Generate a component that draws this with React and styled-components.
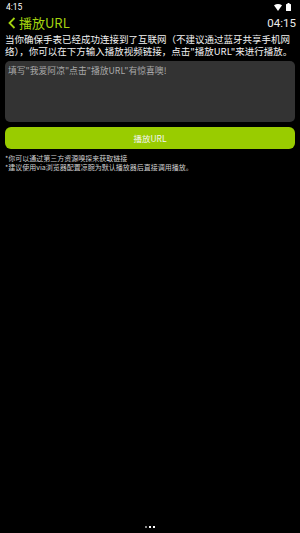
import React from 'react';
import styled, { createGlobalStyle } from 'styled-components';

const GlobalStyle = createGlobalStyle`
  html, body {
    margin: 0;
    padding: 0;
    background: #000;
  }
  body {
    font-family: "Noto Sans CJK SC", "Noto Sans", sans-serif;
  }
`;

const Screen = styled.div`
  width: 300px;
  height: 533px;
  background: #000;
  color: #fff;
  display: flex;
  flex-direction: column;
  position: relative;
  overflow: hidden;
`;

const StatusBar = styled.div`
  height: 14px;
  display: flex;
  align-items: center;
  justify-content: space-between;
  padding: 0 9px 0 6px;
  font-family: Roboto, sans-serif;
  font-size: 8.5px;
  color: #fff;
`;

const StatusIcons = styled.div`
  display: flex;
  align-items: center;
  gap: 4px;
`;

const TitleBar = styled.div`
  height: 17px;
  display: flex;
  align-items: center;
  justify-content: space-between;
  padding: 0 4px 0 8px;
`;

const Back = styled.div`
  display: flex;
  align-items: center;
  gap: 3px;
  color: #a4d40f;
  font-size: 13px;
  line-height: 17px;
`;

const Clock = styled.div`
  font-family: Roboto, sans-serif;
  font-size: 11.5px;
  color: #ececec;
`;

const Content = styled.div`
  padding: 0 5px;
  display: flex;
  flex-direction: column;
`;

const Intro = styled.p`
  margin: 3px 0 0;
  font-size: 9.5px;
  line-height: 11.5px;
  color: #f2f2f2;
`;

const Input = styled.textarea`
  margin-top: 4px;
  height: 61px;
  box-sizing: border-box;
  border: none;
  border-radius: 5px;
  background: #333333;
  padding: 4px 3px;
  resize: none;
  font-family: inherit;
  font-size: 8.8px;
  line-height: 12px;
  color: #fff;
  outline: none;
  &::placeholder {
    color: #a9a9a9;
  }
`;

const PlayButton = styled.button`
  margin-top: 5px;
  height: 22px;
  border: none;
  border-radius: 6px;
  background: #99cc00;
  color: #f4f4f4;
  font-family: inherit;
  font-size: 8.5px;
`;

const Notes = styled.div`
  margin-top: 5px;
  font-size: 7px;
  line-height: 8.5px;
  color: #d0d0d0;
`;

const Pager = styled.div`
  position: absolute;
  bottom: 5px;
  left: 0;
  right: 0;
  display: flex;
  justify-content: center;
  gap: 2px;
`;

const Dot = styled.span`
  width: 2px;
  height: 2px;
  background: ${(p) => (p.active ? '#ffffff' : '#888888')};
`;

export default function App() {
  return (
    <>
      <GlobalStyle />
      <Screen>
        <StatusBar>
          <span>4:15</span>
          <StatusIcons>
            <svg width="8" height="7" viewBox="0 0 8 7">
              <path d="M0 1.2 Q4 -1.2 8 1.2 L4 7 Z" fill="#fff" />
            </svg>
            <svg width="5" height="8" viewBox="0 0 5 8">
              <rect x="1.5" y="0" width="2" height="1" fill="#fff" />
              <rect x="0" y="1" width="5" height="7" rx="0.5" fill="#fff" />
            </svg>
          </StatusIcons>
        </StatusBar>
        <TitleBar>
          <Back>
            <svg width="8" height="12" viewBox="0 0 8 12">
              <path d="M6.5 1 L1.5 6 L6.5 11" stroke="#a4d40f" strokeWidth="1.8" fill="none" />
            </svg>
            <span>播放URL</span>
          </Back>
          <Clock>04:15</Clock>
        </TitleBar>
        <Content>
          <Intro>
            当你确保手表已经成功连接到了互联网（不建议通过蓝牙共享手机网络），你可以在下方输入播放视频链接，点击"播放URL"来进行播放。
          </Intro>
          <Input placeholder={'填写"我爱阿凉"点击"播放URL"有惊喜噢!'} />
          <PlayButton>播放URL</PlayButton>
          <Notes>
            <div>*你可以通过第三方资源嗅探来获取链接</div>
            <div>*建议使用via浏览器配置凉腕为默认播放器后直接调用播放。</div>
          </Notes>
        </Content>
        <Pager>
          <Dot />
          <Dot active />
          <Dot active />
        </Pager>
      </Screen>
    </>
  );
}
